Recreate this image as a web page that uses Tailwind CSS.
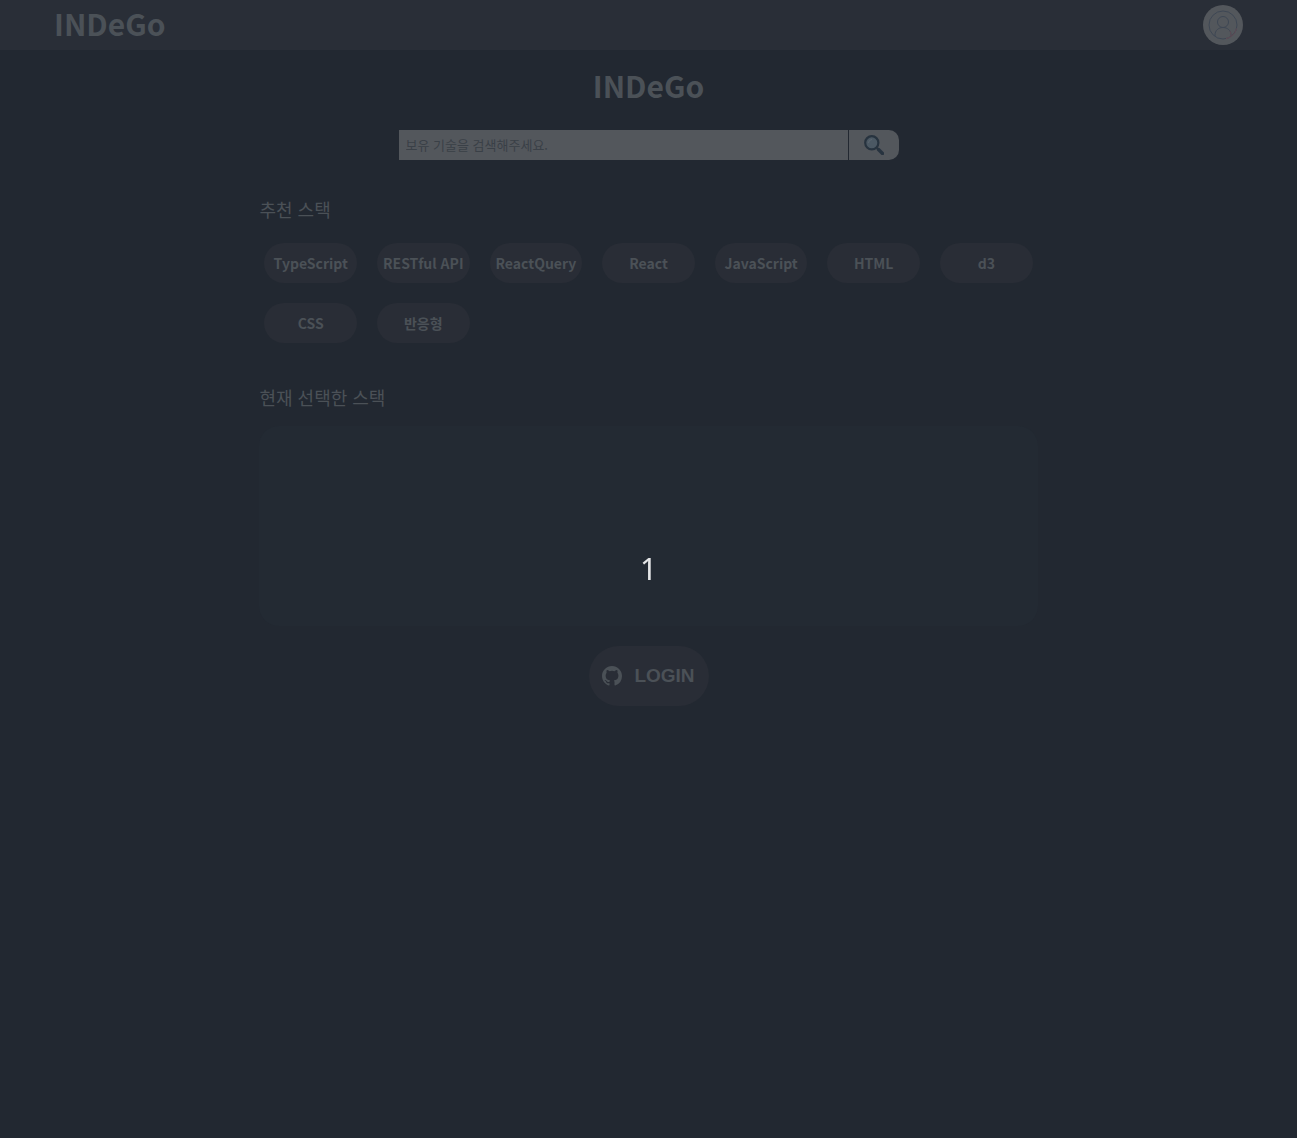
<!DOCTYPE html>
<html lang="ko">
<head>
<meta charset="utf-8">
<meta name="viewport" content="width=device-width, initial-scale=1">
<title>INDeGo</title>
<script src="https://cdn.jsdelivr.net/npm/@tailwindcss/browser@4"></script>
</head>
<body class="min-h-screen bg-[#222831] text-[#4b5157] font-['Noto_Sans_CJK_KR',sans-serif]">
<header class="flex h-[50px] items-center justify-between bg-[#292e37] px-[54px]">
  <a href="#" class="pb-1 text-3xl leading-[46px] font-bold">INDeGo</a>
  <button type="button" aria-label="프로필" class="flex size-10 items-center justify-center rounded-full bg-[#53575c]">
    <svg class="size-[30px]" viewBox="0 0 30 30" fill="none" stroke="#3e4754" stroke-width="1"><circle cx="15" cy="15" r="14"/><circle cx="15" cy="12" r="5.5"/><path d="M7 26v-1c0-4.500 3.500-7.500 8-7.500s8 3 8 7.500v1"/><path d="M28.500 18.500A14 14 0 0 1 18 28.700M23 26v-1c0-1.500-.4-2.800-1-3.800" stroke="#604b55"/></svg>
  </button>
</header>
<main class="mx-auto flex w-3/5 flex-col">
  <h1 class="mt-3 text-center text-3xl leading-[46px] font-bold">INDeGo</h1>
  <form class="mx-auto mt-[22px] flex h-[30px] w-full max-w-[500px] gap-px">
    <input type="text" aria-label="기술 검색" placeholder="보유 기술을 검색해주세요." class="min-w-0 flex-1 bg-[#53575c] px-[7px] text-[13px] placeholder:text-[#3a4047] outline-none">
    <button type="button" aria-label="검색" class="flex w-[50px] items-center justify-center rounded-r-[10px] bg-[#53575c]">
      <svg class="size-5" viewBox="0 0 20 20" fill="none"><path d="M12 12l3 3" stroke="#313a43" stroke-width="2"/><path d="M14.500 14.500l4 4" stroke="#27333f" stroke-width="3.400" stroke-linecap="round"/><circle cx="7.800" cy="7.800" r="6.600" fill="#4b5863" stroke="#27333f" stroke-width="2.200"/><path d="M4.500 8a3.500 3.500 0 0 1 3.500-3.500" stroke="#5b6670"/></svg>
    </button>
  </form>
  <h2 class="mt-[35px] text-lg leading-7">추천 스택</h2>
  <div class="mt-5 grid grid-cols-7 gap-5 px-[5px] text-sm font-bold">
    <button type="button" class="h-10 rounded-[30px] bg-[#292d36] whitespace-nowrap">TypeScript</button>
    <button type="button" class="h-10 rounded-[30px] bg-[#292d36] whitespace-nowrap">RESTful API</button>
    <button type="button" class="h-10 rounded-[30px] bg-[#292d36] whitespace-nowrap">ReactQuery</button>
    <button type="button" class="h-10 rounded-[30px] bg-[#292d36] whitespace-nowrap">React</button>
    <button type="button" class="h-10 rounded-[30px] bg-[#292d36] whitespace-nowrap">JavaScript</button>
    <button type="button" class="h-10 rounded-[30px] bg-[#292d36] whitespace-nowrap">HTML</button>
    <button type="button" class="h-10 rounded-[30px] bg-[#292d36] whitespace-nowrap">d3</button>
    <button type="button" class="h-10 rounded-[30px] bg-[#292d36] whitespace-nowrap">CSS</button>
    <button type="button" class="h-10 rounded-[30px] bg-[#292d36] whitespace-nowrap">반응형</button>
  </div>
  <h2 class="mt-10 text-lg leading-7">현재 선택한 스택</h2>
  <section aria-label="현재 선택한 스택" class="mt-[15px] h-[200px] rounded-[20px] bg-[#232a33]"></section>
  <button type="button" class="mx-auto mt-5 flex h-[60px] w-[120px] items-center justify-center gap-3 rounded-[30px] bg-[#292d36] font-['Liberation_Sans',sans-serif] text-[19px] font-bold">
    <svg class="size-5" viewBox="0 0 16 16" fill="currentColor"><path d="M8 0C3.580 0 0 3.580 0 8c0 3.540 2.290 6.530 5.470 7.590.4.070.55-.17.55-.38 0-.19-.01-.82-.01-1.490-2.010.37-2.530-.49-2.690-.94-.09-.23-.48-.94-.82-1.130-.28-.15-.68-.52-.01-.53.63-.01 1.080.58 1.230.82.720 1.210 1.870.87 2.330.66.070-.52.280-.87.510-1.070-1.780-.2-3.640-.89-3.640-3.950 0-.87.310-1.590.82-2.150-.08-.2-.36-1.020.08-2.120 0 0 .67-.21 2.200.82a7.600 7.600 0 0 1 4 0c1.530-1.040 2.200-.82 2.200-.82.44 1.100.16 1.920.08 2.120.51.56.82 1.270.82 2.150 0 3.070-1.870 3.750-3.650 3.950.29.25.54.73.54 1.480 0 1.070-.01 1.930-.01 2.200 0 .21.150.46.550.38A8.010 8.010 0 0 0 16 8c0-4.420-3.580-8-8-8z"/></svg>
    <span>LOGIN</span>
  </button>
</main>
<div role="status" class="pointer-events-none fixed inset-0 flex items-center justify-center font-['Noto_Sans',sans-serif] text-3xl leading-none text-[#e4e5e7]">1</div>
</body>
</html>
